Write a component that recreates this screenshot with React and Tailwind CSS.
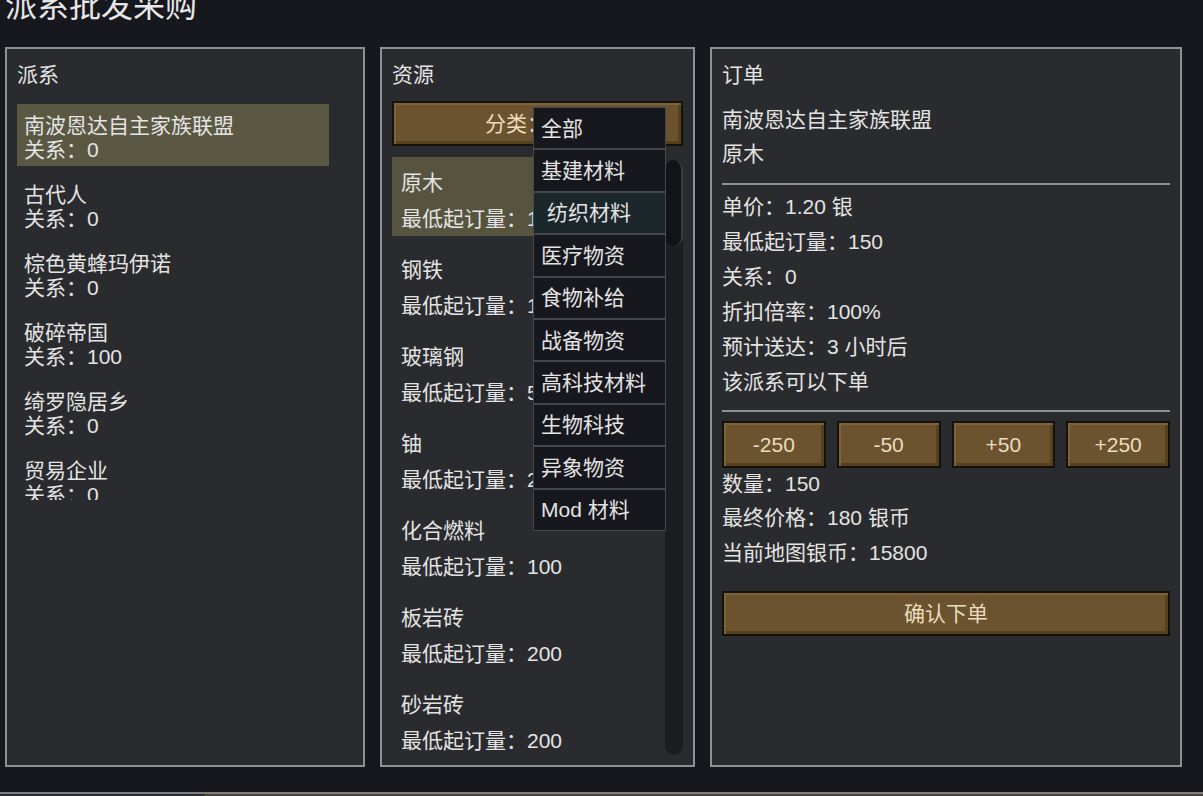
import { useState } from 'react';

const factions = [
  { name: '南波恩达自主家族联盟', rel: 0 },
  { name: '古代人', rel: 0 },
  { name: '棕色黄蜂玛伊诺', rel: 0 },
  { name: '破碎帝国', rel: 100 },
  { name: '绮罗隐居乡', rel: 0 },
  { name: '贸易企业', rel: 0 },
];

const resources = [
  { name: '原木', min: 150 },
  { name: '钢铁', min: 100 },
  { name: '玻璃钢', min: 50 },
  { name: '铀', min: 20 },
  { name: '化合燃料', min: 100 },
  { name: '板岩砖', min: 200 },
  { name: '砂岩砖', min: 200 },
];

const categories = ['全部', '基建材料', '纺织材料', '医疗物资', '食物补给', '战备物资', '高科技材料', '生物科技', '异象物资', 'Mod 材料'];

// brown bevelled game button
const btn =
  'bg-[#6c532f] border-2 border-[#15110c] shadow-[inset_2px_2px_0_#7e6338,inset_-3px_-3px_0_#56411f] text-[#eadcbd] text-[21px] leading-none flex items-center justify-center';

const App = () => {
  const [faction, setFaction] = useState(0);
  const [resource, setResource] = useState(0);
  const [qty, setQty] = useState(150);

  return (
    <div className="w-[1203px] h-[796px] overflow-hidden bg-[#16181d] text-[#e3e3e3] font-['Liberation_Sans','Noto_Sans_CJK_SC',sans-serif] flex flex-col">
      <div className="h-[47px] pl-[5px]">
        <div className="text-[32px] leading-[32px] -mt-[10px] text-[#e6e6e6]">派系批发采购</div>
      </div>

      <div className="flex gap-[15px] pl-[5px] h-[720px]">
        {/* factions */}
        <div className="w-[360px] border-2 border-[#8e9093] bg-[#2a2b2e] pt-[14px] px-[10px] flex flex-col">
          <div className="text-[21px] leading-[24px]">派系</div>
          <div className="mt-[17px] h-[396px] overflow-hidden flex flex-col gap-[7px]">
            {factions.map((f, i) => (
              <div
                key={f.name}
                onClick={() => setFaction(i)}
                className={`w-[312px] h-[62px] shrink-0 pt-[10px] pl-[7px] text-[21px] leading-[24px] ${i === faction ? 'bg-[#5a5843]' : ''}`}
              >
                <div>{f.name}</div>
                <div>关系：{f.rel}</div>
              </div>
            ))}
          </div>
        </div>

        {/* resources */}
        <div className="w-[315px] border-2 border-[#8e9093] bg-[#2a2b2e] pt-[14px] px-[10px] pb-[10px] flex flex-col">
          <div className="text-[21px] leading-[24px]">资源</div>
          <div className="relative mt-[14px]">
            <div className={`${btn} h-[45px] w-full`}>分类：全部</div>
            <div className="absolute top-[6px] left-[141px] w-[133px] z-10 bg-[#17181d]">
              {categories.map((c, i) => (
                <div
                  key={c}
                  className={`h-[42.4px] border border-[#44474c] flex items-center text-[21px] leading-none ${i === 2 ? 'bg-[#1c272b] pl-[13px]' : 'bg-[#17181d] pl-[7px]'}`}
                >
                  {c}
                </div>
              ))}
            </div>
          </div>
          <div className="mt-[11px] flex-1 flex gap-[4px] overflow-hidden">
            <div className="flex-1 flex flex-col gap-[8px]">
              {resources.map((r, i) => (
                <div
                  key={r.name}
                  onClick={() => setResource(i)}
                  className={`h-[79px] shrink-0 pt-[14px] pl-[9px] text-[21px] leading-[24px] ${i === resource ? 'bg-[#56543f]' : ''}`}
                >
                  <div>{r.name}</div>
                  <div className="mt-[12px]">最低起订量：{r.min}</div>
                </div>
              ))}
            </div>
            <div className="w-[18px] mt-[3px] rounded-full bg-[#1c1d20] flex flex-col">
              <div className="h-[86px] rounded-full bg-[#121316] border-r-2 border-[#3a3b3f]" />
            </div>
          </div>
        </div>

        {/* order */}
        <div className="w-[472px] border-2 border-[#8e9093] bg-[#2a2b2e] pt-[14px] px-[10px] flex flex-col text-[21px]">
          <div className="leading-[24px]">订单</div>
          <div className="mt-[16px] leading-[34px]">
            <div>{factions[faction].name}</div>
            <div>{resources[resource].name}</div>
          </div>
          <div className="mt-[12px] h-[2px] bg-[#8e9093]" />
          <div className="mt-[4px] leading-[35px]">
            <div>单价：1.20 银</div>
            <div>最低起订量：{resources[resource].min}</div>
            <div>关系：{factions[faction].rel}</div>
            <div>折扣倍率：100%</div>
            <div>预计送达：3 小时后</div>
            <div>该派系可以下单</div>
          </div>
          <div className="mt-[11px] h-[2px] bg-[#8e9093]" />
          <div className="mt-[9px] grid grid-cols-4 gap-[11px]">
            {[-250, -50, 50, 250].map((d) => (
              <button
                key={d}
                onClick={() => setQty((q) => Math.max(0, q + d))}
                className={`${btn} h-[47px]`}
              >
                {d > 0 ? `+${d}` : d}
              </button>
            ))}
          </div>
          <div className="leading-[32px]">数量：{qty}</div>
          <div className="leading-[35px]">
            <div>最终价格：{Math.round(qty * 1.2)} 银币</div>
            <div>当前地图银币：15800</div>
          </div>
          <button className={`${btn} mt-[21px] h-[45px] w-full`}>确认下单</button>
        </div>
      </div>

      <div className="mt-[25px] h-[4px] border-t-2 border-[#7d7f84] flex">
        <div className="w-[205px] bg-[#2a2b2e]" />
        <div className="flex-1 bg-[#4b4634]" />
      </div>
    </div>
  );
};

export default App;
